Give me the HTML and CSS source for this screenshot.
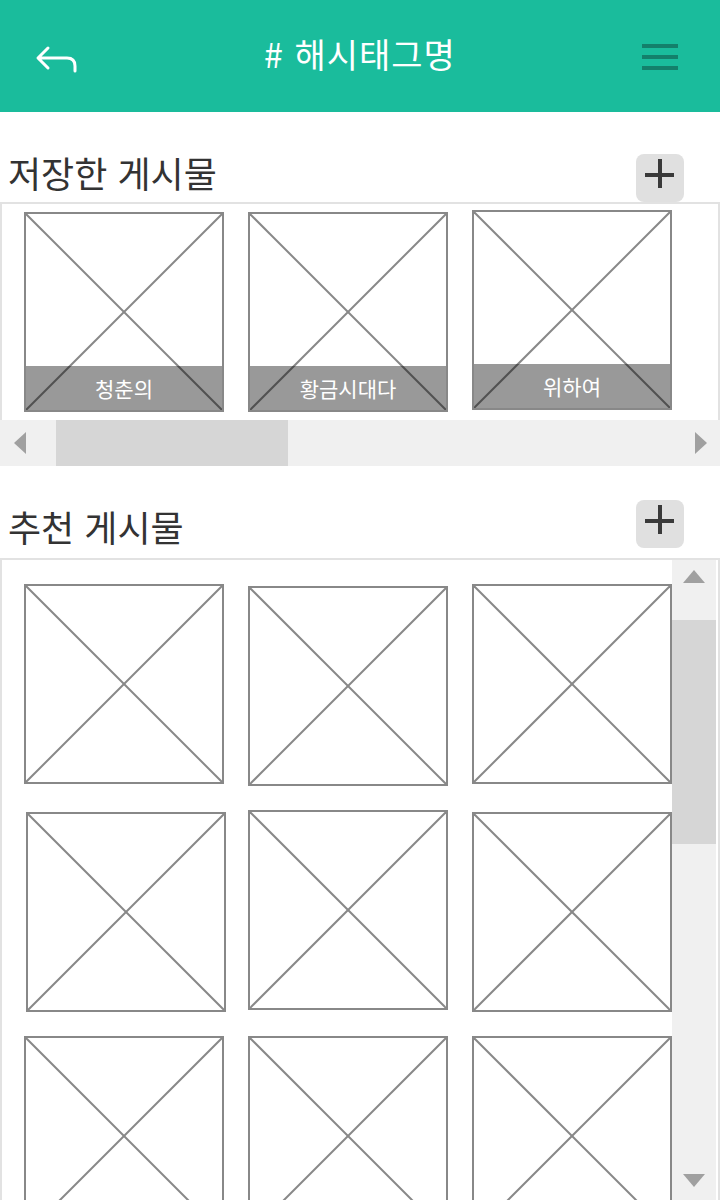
FILE: index.html
```html
<!DOCTYPE html>
<html lang="ko">
<head>
  <meta charset="UTF-8">
  <meta name="viewport" content="width=device-width, initial-scale=1.0">
  <title>#해시태그명</title>
  <link rel="stylesheet" href="styles.css">
</head>
<body>
  <!-- Top bar -->
  <header class="topbar">
    <span class="back-btn">
      <svg width="44" height="36" viewBox="0 0 44 36">
        <path d="M14 8 L4 18 L14 28 M5 18 H33 Q41 18 41 26 V31" fill="none" stroke="#fff" stroke-width="3" stroke-linecap="round" stroke-linejoin="round"/>
      </svg>
    </span>
    <h1 class="topbar-title"># 해시태그명</h1>
    <span class="menu-btn"><i></i><i></i><i></i></span>
  </header>

  <!-- Saved posts -->
  <section class="group saved">
    <div class="group-head">
      <h2>저장한 게시물</h2>
      <span class="add-btn"></span>
    </div>
    <div class="strip">
      <div class="thumb">
        <svg class="cross" viewBox="0 0 100 100" preserveAspectRatio="none"><line x1="0" y1="0" x2="100" y2="100"/><line x1="100" y1="0" x2="0" y2="100"/></svg>
        <span class="caption">청춘의</span>
      </div>
      <div class="thumb">
        <svg class="cross" viewBox="0 0 100 100" preserveAspectRatio="none"><line x1="0" y1="0" x2="100" y2="100"/><line x1="100" y1="0" x2="0" y2="100"/></svg>
        <span class="caption">황금시대다</span>
      </div>
      <div class="thumb lift">
        <svg class="cross" viewBox="0 0 100 100" preserveAspectRatio="none"><line x1="0" y1="0" x2="100" y2="100"/><line x1="100" y1="0" x2="0" y2="100"/></svg>
        <span class="caption">위하여</span>
      </div>
    </div>
    <div class="hbar">
      <span class="arrow-left"></span>
      <span class="hbar-thumb"></span>
      <span class="arrow-right"></span>
    </div>
  </section>

  <!-- Recommended posts -->
  <section class="group recommend">
    <div class="group-head">
      <h2>추천 게시물</h2>
      <span class="add-btn"></span>
    </div>
    <div class="board">
      <div class="grid">
        <div class="thumb"><svg class="cross" viewBox="0 0 100 100" preserveAspectRatio="none"><line x1="0" y1="0" x2="100" y2="100"/><line x1="100" y1="0" x2="0" y2="100"/></svg></div>
        <div class="thumb drop"><svg class="cross" viewBox="0 0 100 100" preserveAspectRatio="none"><line x1="0" y1="0" x2="100" y2="100"/><line x1="100" y1="0" x2="0" y2="100"/></svg></div>
        <div class="thumb"><svg class="cross" viewBox="0 0 100 100" preserveAspectRatio="none"><line x1="0" y1="0" x2="100" y2="100"/><line x1="100" y1="0" x2="0" y2="100"/></svg></div>
        <div class="thumb drop shift"><svg class="cross" viewBox="0 0 100 100" preserveAspectRatio="none"><line x1="0" y1="0" x2="100" y2="100"/><line x1="100" y1="0" x2="0" y2="100"/></svg></div>
        <div class="thumb"><svg class="cross" viewBox="0 0 100 100" preserveAspectRatio="none"><line x1="0" y1="0" x2="100" y2="100"/><line x1="100" y1="0" x2="0" y2="100"/></svg></div>
        <div class="thumb drop"><svg class="cross" viewBox="0 0 100 100" preserveAspectRatio="none"><line x1="0" y1="0" x2="100" y2="100"/><line x1="100" y1="0" x2="0" y2="100"/></svg></div>
        <div class="thumb"><svg class="cross" viewBox="0 0 100 100" preserveAspectRatio="none"><line x1="0" y1="0" x2="100" y2="100"/><line x1="100" y1="0" x2="0" y2="100"/></svg></div>
        <div class="thumb"><svg class="cross" viewBox="0 0 100 100" preserveAspectRatio="none"><line x1="0" y1="0" x2="100" y2="100"/><line x1="100" y1="0" x2="0" y2="100"/></svg></div>
        <div class="thumb"><svg class="cross" viewBox="0 0 100 100" preserveAspectRatio="none"><line x1="0" y1="0" x2="100" y2="100"/><line x1="100" y1="0" x2="0" y2="100"/></svg></div>
      </div>
      <div class="vbar">
        <span class="arrow-up"></span>
        <span class="vbar-thumb"></span>
        <span class="vbar-fill"></span>
        <span class="arrow-down"></span>
      </div>
    </div>
  </section>
</body>
</html>
```

FILE: styles.css
```css
/* Base */
body {
  margin: 0;
  padding: 0;
  height: 1200px;
  overflow: hidden;
  background: #fff;
  font-family: "Noto Sans CJK KR", "Noto Sans", sans-serif;
  color: #333;
}

/* Top bar */
.topbar {
  height: 112px;
  background: #1abc9c;
  display: flex;
  align-items: center;
  justify-content: space-between;
  padding: 0 42px 0 34px;
  box-sizing: border-box;
}

.back-btn {
  display: flex;
  width: 44px;
  height: 36px;
  margin-top: 4px;
}

.topbar-title {
  margin: 0 0 6px 0;
  font-size: 34px;
  font-weight: 400;
  color: #fff;
  letter-spacing: 1px;
}

.menu-btn {
  display: flex;
  flex-direction: column;
  gap: 7px;
  width: 36px;
  margin-top: 2px;
}

.menu-btn i {
  display: block;
  height: 4px;
  background: #13806b;
}

/* Section heads */
.group-head {
  display: flex;
  justify-content: space-between;
  align-items: flex-start;
  height: 48px;
  padding: 0 36px 0 8px;
}

.group-head h2 {
  margin: 0;
  font-size: 36px;
  line-height: 36px;
  font-weight: 400;
  color: #333;
}

.saved .group-head {
  margin-top: 42px;
}

.recommend .group-head {
  margin-top: 34px;
  margin-bottom: 10px;
}

.recommend .group-head h2 {
  margin-top: 8px;
}

.add-btn {
  position: relative;
  width: 48px;
  height: 48px;
  border-radius: 8px;
  background: #e0e0e0;
}

.add-btn::before,
.add-btn::after {
  content: "";
  position: absolute;
  background: #3a3a3a;
}

.add-btn::before {
  left: 9px;
  top: 19px;
  width: 29px;
  height: 4px;
}

.add-btn::after {
  left: 22px;
  top: 5px;
  width: 4px;
  height: 29px;
}

/* Placeholder image */
.thumb {
  position: relative;
  flex: none;
  width: 200px;
  height: 200px;
  border: 2px solid #888;
  box-sizing: border-box;
  background: #fff;
}

.cross {
  display: block;
  width: 100%;
  height: 100%;
}

.cross line {
  stroke: #888;
  stroke-width: 2;
  vector-effect: non-scaling-stroke;
}

.caption {
  position: absolute;
  left: 0;
  right: 0;
  bottom: 0;
  height: 44px;
  line-height: 44px;
  background: rgba(0, 0, 0, 0.4);
  color: #fff;
  font-size: 21px;
  text-align: center;
}

/* Saved strip */
.strip {
  display: flex;
  gap: 24px;
  padding: 8px 22px 0;
  border: 2px solid #e2e2e2;
  border-bottom: 0;
  box-sizing: border-box;
  height: 218px;
  overflow: hidden;
}

.thumb.lift {
  margin-top: -2px;
}

.hbar {
  display: flex;
  align-items: center;
  height: 46px;
  background: #f0f0f0;
}

.arrow-left {
  width: 0;
  height: 0;
  margin: 0 30px 0 14px;
  border-top: 11px solid transparent;
  border-bottom: 11px solid transparent;
  border-right: 12px solid #a0a0a0;
}

.hbar-thumb {
  align-self: stretch;
  width: 232px;
  background: #d6d6d6;
}

.arrow-right {
  width: 0;
  height: 0;
  margin-left: auto;
  margin-right: 13px;
  border-top: 11px solid transparent;
  border-bottom: 11px solid transparent;
  border-left: 12px solid #a0a0a0;
}

/* Recommended board */
.board {
  display: flex;
  height: 642px;
  border: 2px solid #e2e2e2;
  border-bottom: 0;
  box-sizing: border-box;
  overflow: hidden;
}

.grid {
  flex: 1;
  display: grid;
  grid-template-columns: repeat(3, 200px);
  align-content: start;
  column-gap: 24px;
  row-gap: 26px;
  padding: 24px 0 0 22px;
}

.thumb.drop {
  margin-top: 2px;
  margin-bottom: -2px;
}

.thumb.shift {
  margin-left: 2px;
}

.vbar {
  display: flex;
  flex-direction: column;
  align-items: center;
  width: 44px;
  margin-right: 2px;
  background: #f0f0f0;
}

.arrow-up {
  width: 0;
  height: 0;
  margin: 10px 0 37px;
  border-left: 11px solid transparent;
  border-right: 11px solid transparent;
  border-bottom: 13px solid #a0a0a0;
}

.vbar-thumb {
  align-self: stretch;
  height: 224px;
  background: #d6d6d6;
}

.vbar-fill {
  flex: 1;
}

.arrow-down {
  width: 0;
  height: 0;
  margin-bottom: 13px;
  border-left: 11px solid transparent;
  border-right: 11px solid transparent;
  border-top: 13px solid #a0a0a0;
}
```
